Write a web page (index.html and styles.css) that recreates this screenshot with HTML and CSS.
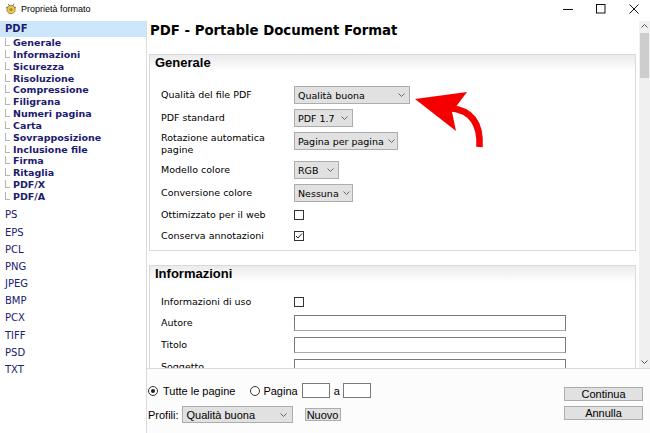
FILE: index.html
```html
<!DOCTYPE html>
<html lang="it">
<head>
    <meta charset="UTF-8">
    <title>Proprietà formato</title>
    <link rel="stylesheet" href="styles.css">
</head>
<body>
<div class="window">

    <!-- Title bar -->
    <div class="titlebar">
        <svg class="app-icon" width="12" height="13" viewBox="0 0 12 13">
            <circle cx="6" cy="7.5" r="4.2" fill="#e8c84a" stroke="#8a7a3a" stroke-width="0.8"/>
            <path d="M3 2 L5 4 M9 1.5 L7.5 4 M1 5 L3 6 M11 5 L9 6" stroke="#666" stroke-width="0.9"/>
            <circle cx="6" cy="7.5" r="1.6" fill="#b08a2a"/>
        </svg>
        <span class="title-text">Proprietà formato</span>
        <div class="win-controls">
            <div class="win-btn">
                <svg width="10" height="10" viewBox="0 0 10 10"><path d="M0 5.5 H10" stroke="#111" stroke-width="1"/></svg>
            </div>
            <div class="win-btn">
                <svg width="10" height="10" viewBox="0 0 10 10"><rect x="0.5" y="0.5" width="8.5" height="8.5" fill="none" stroke="#111" stroke-width="1"/></svg>
            </div>
            <div class="win-btn">
                <svg width="10" height="10" viewBox="0 0 10 10"><path d="M0.5 0.5 L9.5 9.5 M9.5 0.5 L0.5 9.5" stroke="#111" stroke-width="1"/></svg>
            </div>
        </div>
    </div>

    <div class="window-body">

        <!-- Format tree -->
        <div class="sidebar">
            <div class="nav-head">PDF</div>
            <ul class="nav-sub">
                <li>Generale</li>
                <li>Informazioni</li>
                <li>Sicurezza</li>
                <li>Risoluzione</li>
                <li>Compressione</li>
                <li>Filigrana</li>
                <li>Numeri pagina</li>
                <li>Carta</li>
                <li>Sovrapposizione</li>
                <li>Inclusione file</li>
                <li>Firma</li>
                <li>Ritaglia</li>
                <li>PDF/X</li>
                <li>PDF/A</li>
            </ul>
            <ul class="nav-formats">
                <li>PS</li>
                <li>EPS</li>
                <li>PCL</li>
                <li>PNG</li>
                <li>JPEG</li>
                <li>BMP</li>
                <li>PCX</li>
                <li>TIFF</li>
                <li>PSD</li>
                <li>TXT</li>
            </ul>
        </div>

        <div class="main">
            <div class="scroller">
                <div class="content">
                    <div class="page-title">PDF - Portable Document Format</div>

                    <!-- Generale -->
                    <div class="panel">
                        <div class="panel-head">Generale</div>
                        <div class="form-grid">
                            <div class="label">Qualità del file PDF</div>
                            <div class="combo w116"><span>Qualità buona</span><svg width="7" height="4" viewBox="0 0 7 4"><path d="M0.5 0.5 L3.5 3.5 L6.5 0.5" stroke="#666" fill="none"/></svg></div>

                            <div class="label">PDF standard</div>
                            <div class="combo w59"><span>PDF 1.7</span><svg width="7" height="4" viewBox="0 0 7 4"><path d="M0.5 0.5 L3.5 3.5 L6.5 0.5" stroke="#666" fill="none"/></svg></div>

                            <div class="label">Rotazione automatica<br>pagine</div>
                            <div class="combo w104"><span>Pagina per pagina</span><svg width="7" height="4" viewBox="0 0 7 4"><path d="M0.5 0.5 L3.5 3.5 L6.5 0.5" stroke="#666" fill="none"/></svg></div>

                            <div class="label">Modello colore</div>
                            <div class="combo w45"><span>RGB</span><svg width="7" height="4" viewBox="0 0 7 4"><path d="M0.5 0.5 L3.5 3.5 L6.5 0.5" stroke="#666" fill="none"/></svg></div>

                            <div class="label">Conversione colore</div>
                            <div class="combo w59"><span>Nessuna</span><svg width="7" height="4" viewBox="0 0 7 4"><path d="M0.5 0.5 L3.5 3.5 L6.5 0.5" stroke="#666" fill="none"/></svg></div>

                            <div class="label check-row">Ottimizzato per il web</div>
                            <div class="check-cell"><span class="checkbox"></span></div>

                            <div class="label check-row">Conserva annotazioni</div>
                            <div class="check-cell"><span class="checkbox"><svg width="8" height="8" viewBox="0 0 8 8"><path d="M1 4 L3 6 L7 1.5" stroke="#222" stroke-width="1" fill="none"/></svg></span></div>
                        </div>
                    </div>

                    <!-- Informazioni -->
                    <div class="panel">
                        <div class="panel-head">Informazioni</div>
                        <div class="form-grid info-grid">
                            <div class="label check-row">Informazioni di uso</div>
                            <div class="check-cell"><span class="checkbox"></span></div>

                            <div class="label">Autore</div>
                            <div class="text-input"></div>

                            <div class="label">Titolo</div>
                            <div class="text-input"></div>

                            <div class="label">Soggetto</div>
                            <div class="text-input"></div>
                        </div>
                    </div>
                </div>

                <!-- Scrollbar -->
                <div class="scrollbar">
                    <svg class="scroll-arrow" width="7" height="4" viewBox="0 0 7 4"><path d="M0.5 3.5 L3.5 0.5 L6.5 3.5" stroke="#555" fill="none"/></svg>
                    <div class="scroll-thumb"></div>
                    <div class="scroll-track"></div>
                    <svg class="scroll-arrow" width="7" height="4" viewBox="0 0 7 4"><path d="M0.5 0.5 L3.5 3.5 L6.5 0.5" stroke="#555" fill="none"/></svg>
                </div>
            </div>

            <!-- Bottom bar -->
            <div class="footer">
                <div class="footer-left">
                    <div class="range-row">
                        <span class="radio checked"></span>
                        <span class="radio-label">Tutte le pagine</span>
                        <span class="radio second"></span>
                        <span class="radio-label">Pagina</span>
                        <span class="small-input first"></span>
                        <span class="to-label">a</span>
                        <span class="small-input"></span>
                    </div>
                    <div class="profile-row">
                        <span>Profili:</span>
                        <div class="combo profile-combo"><span>Qualità buona</span><svg width="7" height="4" viewBox="0 0 7 4"><path d="M0.5 0.5 L3.5 3.5 L6.5 0.5" stroke="#666" fill="none"/></svg></div>
                        <span class="btn new-btn">Nuovo</span>
                    </div>
                </div>
                <div class="footer-right">
                    <span class="btn action-btn">Continua</span>
                    <span class="btn action-btn">Annulla</span>
                </div>
            </div>
        </div>
    </div>

    <!-- Red arrow pointing at the quality combo -->
    <svg class="pointer-arrow" width="650" height="433" viewBox="0 0 650 433">
        <path d="M450 108 C470 110, 481 122, 479.5 147" stroke="#f50000" stroke-width="6.5" fill="none"/>
        <polygon points="415,99 467,92 452,112 456,131" fill="#f50000"/>
    </svg>
</div>
</body>
</html>
```

FILE: styles.css
```css
* {
    box-sizing: border-box;
}

body {
    margin: 0;
    background: #fff;
    font-family: "DejaVu Sans", Verdana, sans-serif;
    font-size: 9.5px;
    color: #000;
}

.window {
    position: relative;
    width: 650px;
    height: 433px;
    display: flex;
    flex-direction: column;
    overflow: hidden;
}

/* Title bar */
.titlebar {
    height: 21px;
    flex-shrink: 0;
    display: flex;
    align-items: center;
    padding: 0 0 4px 5px;
    font-family: "Liberation Sans", Arial, sans-serif;
    font-size: 9px;
}

.app-icon {
    margin-right: 4px;
}

.win-controls {
    margin-left: auto;
    display: flex;
}

.win-btn {
    width: 33px;
    height: 14px;
    display: flex;
    align-items: center;
    justify-content: center;
}

.window-body {
    flex: 1;
    display: flex;
    min-height: 0;
}

/* Sidebar */
.sidebar {
    width: 147px;
    flex-shrink: 0;
    border-right: 1px solid #dcdcdc;
    color: #1b1b6e;
}

.nav-head {
    height: 16px;
    line-height: 16px;
    padding-left: 5px;
    background: #cde6fa;
    font-weight: bold;
    font-size: 10px;
}

.nav-sub,
.nav-formats {
    list-style: none;
    margin: 0;
    padding: 0;
}

.nav-sub li {
    height: 11.85px;
    line-height: 11.85px;
    padding-left: 5px;
    font-weight: bold;
    font-size: 9.5px;
    white-space: nowrap;
}

.nav-sub li::before {
    content: "";
    display: inline-block;
    width: 4px;
    height: 7px;
    border-left: 1px solid #b4b4b4;
    border-bottom: 1px solid #b4b4b4;
    margin-right: 3px;
}

.nav-formats {
    margin-top: 3.5px;
}

.nav-formats li {
    height: 17.2px;
    line-height: 17.2px;
    padding-left: 5px;
    font-size: 10px;
    color: #202070;
}

/* Main area */
.main {
    flex: 1;
    min-width: 0;
    display: flex;
    flex-direction: column;
}

.scroller {
    flex: 1;
    min-height: 0;
    display: flex;
    overflow: hidden;
}

.content {
    flex: 1;
    min-width: 0;
    padding: 0 3px 0 2px;
    overflow: hidden;
}

.page-title {
    margin: 0 0 13px 1px;
    line-height: 20px;
    font-weight: bold;
    font-size: 13.3px;
}

.panel {
    border: 1px solid #dadada;
    margin-bottom: 14px;
    padding-bottom: 6px;
}

.panel-head {
    height: 16px;
    line-height: 15px;
    padding-left: 5px;
    font-family: "Liberation Sans", Arial, sans-serif;
    font-weight: bold;
    font-size: 13px;
    background: linear-gradient(#ebebeb, #fff);
}

.form-grid {
    display: grid;
    grid-template-columns: 133px 1fr;
    row-gap: 5px;
    padding: 15px 11px 0;
}

.info-grid {
    row-gap: 6px;
    padding-top: 13px;
}

.label {
    align-self: center;
    line-height: 12px;
    white-space: nowrap;
}

.check-row {
    line-height: 16px;
}

.info-grid .check-row {
    line-height: 14px;
}

.check-cell {
    display: flex;
    align-items: center;
}

.checkbox {
    width: 10px;
    height: 10px;
    border: 1px solid #333;
    background: #fff;
    display: flex;
    align-items: center;
    justify-content: center;
}

/* Combo boxes */
.combo {
    height: 18px;
    display: flex;
    align-items: center;
    justify-content: space-between;
    padding: 0 4px 0 3px;
    background: #e1e1e1;
    border: 1px solid #adadad;
    align-self: start;
    white-space: nowrap;
}

.combo svg {
    flex-shrink: 0;
    margin-left: 4px;
}

.w116 { width: 116px; }
.w104 { width: 104px; }
.w59 { width: 59px; }
.w45 { width: 45px; }

.text-input {
    width: 272px;
    height: 16px;
    border: 1px solid #7a7a7a;
    border-bottom-color: #a8a8a8;
    background: #fff;
}

/* Scrollbar */
.scrollbar {
    width: 11px;
    flex-shrink: 0;
    background: #f0f0f0;
    display: flex;
    flex-direction: column;
    align-items: center;
    padding: 3px 0 4px;
}

.scroll-thumb {
    width: 9px;
    height: 45px;
    margin-top: 5px;
    background: #cdcdcd;
}

.scroll-track {
    flex: 1;
}

/* Footer */
.footer {
    height: 65px;
    flex-shrink: 0;
    border-top: 1px solid #dadada;
    background: #fcfcfc;
    display: flex;
    padding: 14px 7px 0 1px;
    font-family: "Liberation Sans", Arial, sans-serif;
    font-size: 11px;
}

.footer-left {
    flex: 1;
    display: flex;
    flex-direction: column;
    gap: 8px;
}

.range-row,
.profile-row {
    display: flex;
    align-items: center;
}

.range-row {
    height: 15px;
}

.radio {
    width: 10px;
    height: 10px;
    border: 1px solid #333;
    border-radius: 50%;
    background: #fff;
    display: flex;
    align-items: center;
    justify-content: center;
    margin-right: 5px;
}

.radio.checked::after {
    content: "";
    width: 4px;
    height: 4px;
    border-radius: 50%;
    background: #222;
}

.radio.second {
    margin-left: 15px;
    margin-right: 3px;
}

.small-input {
    width: 28px;
    height: 15px;
    border: 1px solid #7a7a7a;
    background: #fff;
}

.small-input.first {
    margin-left: 4px;
}

.to-label {
    margin: 0 3px 0 4px;
}

.profile-row {
    height: 17px;
}

.profile-combo {
    width: 111px;
    height: 17px;
    margin-left: 3px;
    padding: 0 5px 0 4px;
}

.btn {
    display: flex;
    align-items: center;
    justify-content: center;
    background: #e1e1e1;
    border: 1px solid #adadad;
}

.new-btn {
    width: 36px;
    height: 13px;
    margin-left: 12px;
}

.footer-right {
    display: flex;
    flex-direction: column;
    gap: 5px;
    padding-top: 4px;
}

.action-btn {
    width: 79px;
    height: 14px;
}

.pointer-arrow {
    position: absolute;
    left: 0;
    top: 0;
    pointer-events: none;
}
```
